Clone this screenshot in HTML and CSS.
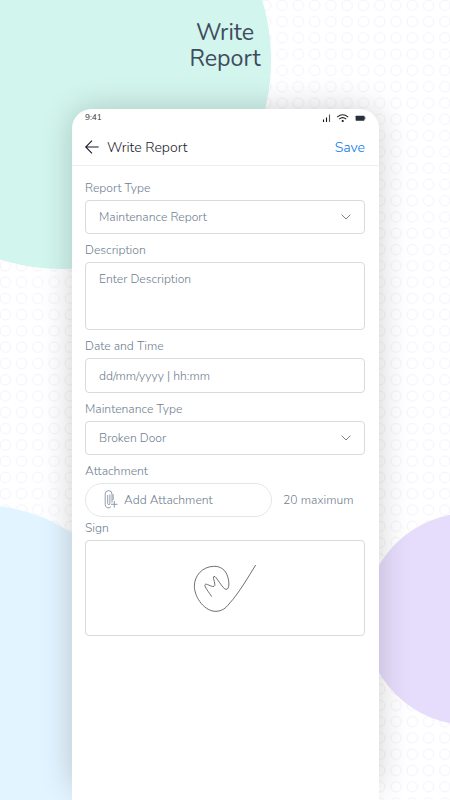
FILE: index.html
```html
<!DOCTYPE html>
<html lang="en">
<head>
<meta charset="utf-8">
<title>Write Report</title>
<link rel="stylesheet" href="styles.css">
</head>
<body>
<div class="stage">
  <svg class="backdrop" viewBox="0 0 450 800" aria-hidden="true">
    <defs>
      <pattern id="rings" x="-2.84" y="-2.84" width="16.28" height="16.28" patternUnits="userSpaceOnUse">
        <circle cx="8.14" cy="8.14" r="5.2" fill="none" stroke="#f0effb" stroke-width=".9"/>
      </pattern>
    </defs>
    <rect width="450" height="800" fill="url(#rings)"/>
    <circle cx="62" cy="60" r="209" fill="#d2f5ee"/>
    <circle cx="-20" cy="670" r="165" fill="#e2f4ff"/>
    <circle cx="470.8" cy="619" r="106.3" fill="#e6ddfc"/>
  </svg>
  <h1 class="headline">Write<br>Report</h1>
  <main class="phone">
    <div class="status">
      <span class="clock">9:41</span>
      <svg class="status-icons" viewBox="0 0 44 10" aria-hidden="true">
        <path d="M1.5 9V6.5M4.5 9V4.5" stroke="#111" stroke-width="1.1"/>
        <path d="M7.5 9V1.5" stroke="#555" stroke-width="1.1"/>
        <path d="M15.2 4.1Q20.7-.5 26.2 4.1M17.2 6.1Q20.7 3.2 24.2 6.1" fill="none" stroke="#222" stroke-width="1.1"/>
        <circle cx="20.7" cy="8" r="1.1" fill="#111"/>
        <rect x="33.6" y="2.7" width="8.8" height="5" rx=".6" fill="#28303b"/>
        <path d="M42.8 4.1v2.2" stroke="#28303b"/>
      </svg>
    </div>
    <header class="bar">
      <svg class="back" viewBox="0 0 14 14" aria-hidden="true"><path d="M13.7 7H.8M7 .7L.7 7 7 13.3" fill="none" stroke="#1c1b2b" stroke-width="1.1"/></svg>
      <span class="title">Write Report</span>
      <span class="save">Save</span>
    </header>
    <form class="form">
      <div class="label">Report Type</div>
      <div class="field"><span>Maintenance Report</span><svg class="chevron" viewBox="0 0 10 6" aria-hidden="true"><path d="M.6.6L5 5 9.4.6"/></svg></div>
      <div class="label">Description</div>
      <div class="field area"><span>Enter Description</span></div>
      <div class="label">Date and Time</div>
      <div class="field"><span>dd/mm/yyyy | hh:mm</span></div>
      <div class="label">Maintenance Type</div>
      <div class="field"><span>Broken Door</span><svg class="chevron" viewBox="0 0 10 6" aria-hidden="true"><path d="M.6.6L5 5 9.4.6"/></svg></div>
      <div class="label">Attachment</div>
      <div class="attach">
        <div class="pill">
          <svg class="clip" viewBox="0 0 14 20" aria-hidden="true"><path d="M9.2 10V4.3M8 12.5V4A3.4 3.4 0 0 0 1.2 4v10.3a3.3 3.3 0 0 0 5.8 2.4M5.9 4.5v9a1.1 1.1 0 0 1-2.2 0V5M10.3 11v6.6M7 14.3h6.6"/></svg>
          <span>Add Attachment</span>
        </div>
        <span class="max">20 maximum</span>
      </div>
      <div class="label sign-label">Sign</div>
      <div class="field sign">
        <svg class="signature" viewBox="0 0 270 210" aria-label="Signature"><path d="M95 140C88 128 72 110 75 104S94 112 102 109 96 82 102 79 127 117 138 118 148 94 143 80C137 59 121 48 101 49 67 50 43 77 43 109 44 145 76 185 108 184 126 183 137 175 147 162 177 129 204 82 227 45"/></svg>
      </div>
    </form>
  </main>
</div>
</body>
</html>
```
FILE: styles.css
```css
* { box-sizing: border-box; }
body { margin: 0; background: #fff; font-family: Nunito, "Open Sans", sans-serif; font-weight: 300; }
.stage { position: relative; isolation: isolate; width: 450px; height: 800px; overflow: hidden; }
.backdrop { position: absolute; z-index: -2; inset: 0; width: 450px; height: 800px; }
.headline { position: relative; margin: 0; height: 109px; padding-top: 20px; text-align: center; font-size: 23.2px; line-height: 26px; font-weight: 400; color: #414b5c; }
.phone { position: relative; width: 307px; height: 691px; margin-left: 71.5px; background: #fff; border-radius: 20px 20px 0 0; }
.phone::before { content: ""; position: absolute; z-index: -1; inset: 0 0 8px; border-radius: 20px; box-shadow: 0 0 32px rgba(0, 0, 0, .19); }
.status { height: 20px; padding: 0 13px 2px 13.5px; display: flex; align-items: center; justify-content: space-between; }
.clock { font-size: 8.3px; line-height: 12px; font-weight: 400; color: #333; }
.status-icons { width: 44px; height: 10px; }
.bar { height: 37px; padding: 1px 13.5px 0; display: flex; align-items: center; border-bottom: 1px solid #eceef0; }
.back { width: 14px; height: 14px; margin: 0 8px 1px 0; }
.title, .save { font-size: 14.1px; line-height: 20px; color: #1c1b2b; white-space: nowrap; }
.save { margin-left: auto; color: #0878e8; }
.form { padding: 13.6px 13.5px 0; color: #708090; font-size: 12.15px; }
.label { height: 20px; line-height: 17px; white-space: nowrap; }
.field { height: 34.5px; margin-bottom: 7.7px; padding: 0 13px; border: 1px solid #d8dadc; border-radius: 4px; display: flex; align-items: center; justify-content: space-between; white-space: nowrap; line-height: 18px; }
.area { height: 68px; margin-bottom: 8.7px; align-items: flex-start; padding-top: 7px; }
.chevron { width: 10px; height: 6px; fill: none; stroke: #657484; stroke-width: .9; }
.attach { display: flex; align-items: center; height: 34.5px; }
.pill { width: 187px; height: 34.5px; border: 1px solid #e4e7e9; border-radius: 18px; padding-left: 18px; display: flex; align-items: center; white-space: nowrap; }
.clip { width: 14px; height: 20px; margin-right: 6px; fill: none; stroke: #778695; stroke-width: .8; }
.max { margin-left: 11px; white-space: nowrap; }
.sign-label { height: 23px; padding-top: 3px; }
.sign { height: 96px; padding: 0; align-items: flex-start; justify-content: flex-start; }
.signature { width: 90px; height: 70px; margin: 9px 0 0 93.6px; fill: none; stroke: #444; stroke-width: 2.3; }
```
